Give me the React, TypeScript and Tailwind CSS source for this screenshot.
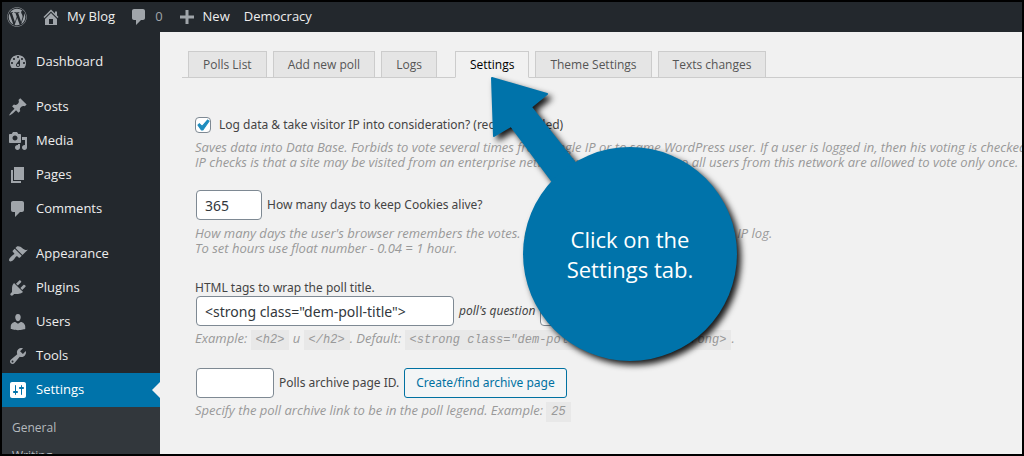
import React from 'react';
import { FaWordpress } from 'react-icons/fa';

const paths = {
  home: 'M16 8.5l1.53 1.53-1.06 1.06L10 4.6l-6.47 6.49-1.06-1.06L10 2.5l4 4v-2h2v4zm-6-2.46l6 5.99V18H4v-5.97zM12 17v-5H8v5h4z',
  comments: 'M5 2h9c1.1 0 2 .9 2 2v7c0 1.1-.9 2-2 2h-2l-5 5v-5H5c-1.1 0-2-.9-2-2V4c0-1.1.9-2 2-2z',
  plus: 'M17 8.5v3h-5.5V17h-3v-5.5H3v-3h5.5V3h3v5.5z',
  dashboard:
    'M3.76 16h12.48c1.1-1.37 1.76-3.11 1.76-5 0-4.42-3.58-8-8-8s-8 3.58-8 8c0 1.89.66 3.63 1.76 5zM10 4c.55 0 1 .45 1 1s-.45 1-1 1-1-.45-1-1 .45-1 1-1zM6 6c.55 0 1 .45 1 1s-.45 1-1 1-1-.45-1-1 .45-1 1-1zm8 0c.55 0 1 .45 1 1s-.45 1-1 1-1-.45-1-1 .45-1 1-1zm-5.37 5.55L12 7v6c0 1.1-.9 2-2 2s-2-.9-2-2c0-.57.24-1.08.63-1.45zM4 10c.55 0 1 .45 1 1s-.45 1-1 1-1-.45-1-1 .45-1 1-1zm12 0c.55 0 1 .45 1 1s-.45 1-1 1-1-.45-1-1 .45-1 1-1zm-5 3c0-.55-.45-1-1-1s-1 .45-1 1 .45 1 1 1 1-.45 1-1z',
  post: 'M10.44 3.02l1.82-1.82 6.36 6.35-1.83 1.82c-1.05-.68-2.48-.57-3.41.36l-.75.75c-.92.93-1.04 2.35-.35 3.41l-1.83 1.82-2.41-2.41-2.8 2.79c-.42.42-3.38 2.71-3.8 2.29s1.86-3.39 2.28-3.81l2.79-2.79L4.1 9.36l1.83-1.82c1.05.69 2.48.57 3.4-.36l.75-.75c.93-.92 1.05-2.35.36-3.41z',
  media:
    'M13 11V4c0-.55-.45-1-1-1h-1.67L9 1H5L3.67 3H2c-.55 0-1 .45-1 1v7c0 .55.45 1 1 1h10c.55 0 1-.45 1-1zM7 4.5c1.38 0 2.5 1.12 2.5 2.5S8.38 9.5 7 9.5 4.5 8.38 4.5 7 5.62 4.5 7 4.5zM14 6h5v10.5c0 1.38-1.12 2.5-2.5 2.5S14 17.88 14 16.5s1.12-2.5 2.5-2.5c.17 0 .34.02.5.05V9h-3V6zm-4 8.05V13h2v3.5c0 1.38-1.12 2.5-2.5 2.5S7 17.88 7 16.5 8.12 14 9.5 14c.17 0 .34.02.5.05z',
  page: 'M6 15V2h10v13H6zm-1 1h8v2H3V5h2v11z',
  appearance:
    'M14.48 11.06L7.41 3.99l1.5-1.5c.5-.56 2.3-.47 3.51.32 1.21.8 1.43 1.28 2.91 2.1 1.18.64 2.45 1.26 4.45.85zm-.71.71L6.7 4.7 4.93 6.47c-.39.39-.39 1.02 0 1.41l1.06 1.06c.39.39.39 1.03 0 1.42-.6.6-1.43 1.11-2.21 1.69-.35.26-.7.53-1.01.84C1.43 14.23.4 16.08 1.4 17.07c.99 1 2.84-.03 4.18-1.36.31-.31.58-.66.85-1.02.57-.78 1.08-1.61 1.69-2.21.39-.39 1.02-.39 1.41 0l1.06 1.06c.39.39 1.02.39 1.41 0z',
  plugins:
    'M13.11 4.36L9.87 7.6 8 5.73l3.24-3.24c.35-.34 1.05-.2 1.56.32.52.51.66 1.21.31 1.55zm-8 1.77l.91-1.12 9.01 9.01-1.19.84c-.71.71-2.63 1.16-3.82 1.16H6.14L4.9 17.26c-.59.59-1.54.59-2.12 0-.59-.58-.59-1.53 0-2.12l1.24-1.24v-3.88c0-1.13.4-3.19 1.09-3.89zm7.26 3.97l3.24-3.24c.34-.35 1.04-.21 1.55.31.52.51.66 1.21.31 1.55l-3.24 3.25z',
  users:
    'M10 9.25c-2.27 0-2.73-3.44-2.73-3.44C7 4.02 7.82 2 9.97 2c2.16 0 2.98 2.02 2.71 3.81 0 0-.41 3.44-2.68 3.44zm0 2.57L12.72 10c2.39 0 4.52 2.33 4.52 4.53v2.49s-3.65 1.13-7.24 1.13c-3.65 0-7.24-1.13-7.24-1.13v-2.49c0-2.25 1.94-4.48 4.47-4.48z',
  tools:
    'M16.68 9.77c-1.34 1.34-3.3 1.67-4.95.99l-5.41 6.52c-.99.99-2.59.99-3.58 0s-.99-2.59 0-3.57l6.52-5.42c-.68-1.65-.35-3.61.99-4.95 1.28-1.28 3.12-1.62 4.72-1.06l-2.89 2.89 2.82 2.82 2.86-2.87c.53 1.58.18 3.39-1.08 4.65zM3.81 16.21c.4.39 1.04.39 1.43 0 .4-.4.4-1.04 0-1.43-.39-.4-1.03-.4-1.43 0-.39.39-.39 1.03 0 1.43z',
  settings:
    'M18 16V4c0-1.1-.9-2-2-2H4c-1.1 0-2 .9-2 2v12c0 1.1.9 2 2 2h12c1.1 0 2-.9 2-2zM8 11h1c.55 0 1 .45 1 1s-.45 1-1 1H8v1.5c0 .28-.22.5-.5.5s-.5-.22-.5-.5V13H6c-.55 0-1-.45-1-1s.45-1 1-1h1V5.5c0-.28.22-.5.5-.5s.5.22.5.5V11zm5-2h-1c-.55 0-1-.45-1-1s.45-1 1-1h1V5.5c0-.28.22-.5.5-.5s.5.22.5.5V7h1c.55 0 1 .45 1 1s-.45 1-1 1h-1v5.5c0 .28-.22.5-.5.5s-.5-.22-.5-.5V9z',
};

type IconName = keyof typeof paths;

const Icon: React.FC<{ name: IconName; className?: string }> = ({ name, className = '' }) => (
  <svg viewBox="0 0 20 20" fill="currentColor" aria-hidden="true" className={`size-5 shrink-0 ${className}`}>
    <path fillRule="evenodd" d={paths[name]} />
  </svg>
);

const menuGroups: { label: string; icon: IconName }[][] = [
  [{ label: 'Dashboard', icon: 'dashboard' }],
  [
    { label: 'Posts', icon: 'post' },
    { label: 'Media', icon: 'media' },
    { label: 'Pages', icon: 'page' },
    { label: 'Comments', icon: 'comments' },
  ],
  [
    { label: 'Appearance', icon: 'appearance' },
    { label: 'Plugins', icon: 'plugins' },
    { label: 'Users', icon: 'users' },
    { label: 'Tools', icon: 'tools' },
    { label: 'Settings', icon: 'settings' },
  ],
];

const tabGroups = [
  ['Polls List', 'Add new poll', 'Logs'],
  ['Settings', 'Theme Settings', 'Texts changes'],
];

const inputClass = 'h-[30px] rounded border border-[#7e8993] bg-white px-2 text-sm text-[#32373c]';

const AdminBar = () => (
  <header className="flex h-[30px] shrink-0 items-center gap-[14px] bg-[#23282d] pl-[5px] text-[13px] text-[#eee]">
    <a href="#" aria-label="About WordPress" className="text-[#a0a5aa]">
      <FaWordpress className="size-5" />
    </a>
    <a href="#" className="flex items-center gap-[6px]">
      <Icon name="home" className="text-[#a0a5aa]" />
      My Blog
    </a>
    <a href="#" className="flex items-center gap-[6px] text-[#a0a5aa]">
      <Icon name="comments" />
      0
    </a>
    <a href="#" className="flex items-center gap-[6px]">
      <Icon name="plus" className="text-[#a0a5aa]" />
      New
    </a>
    <a href="#">Democracy</a>
  </header>
);

const Sidebar = () => (
  <nav className="w-[158px] shrink-0 bg-[#23282d] pt-[13px] text-[13px] text-[#eee]">
    <div className="flex flex-col gap-[11px]">
      {menuGroups.map((group, index) => (
        <ul key={index}>
          {group.map(({ label, icon }) => {
            const active = label === 'Settings';
            return (
              <li key={label} className={`relative ${active ? 'bg-[#0073aa] text-white' : ''}`}>
                <a href="#" className="flex h-[34px] items-center gap-2 pl-[6px]">
                  <Icon name={icon} className={active ? 'text-white' : 'text-[#a0a5aa]'} />
                  {label}
                </a>
                {active && (
                  <span className="absolute top-[9px] right-0 border-8 border-transparent border-r-[#f1f1f1]" />
                )}
              </li>
            );
          })}
        </ul>
      ))}
    </div>
    <ul className="bg-[#32373c] pt-[7px] pl-[10px] text-xs text-[#b4b9be]">
      <li className="h-7 leading-7">
        <a href="#">General</a>
      </li>
      <li className="h-7 leading-7">
        <a href="#">Writing</a>
      </li>
    </ul>
  </nav>
);

const Tabs = () => (
  <nav className="flex gap-[18px] border-b border-[#ccc] pl-[6px] text-xs font-medium text-[#555]">
    {tabGroups.map((group, index) => (
      <div key={index} className="-mb-px flex gap-[6px]">
        {group.map((tab) => (
          <a
            key={tab}
            href="#"
            className={`border px-[14px] leading-[25px] ${
              tab === 'Settings'
                ? 'border-[#ccc] border-b-[#f1f1f1] bg-[#f1f1f1] text-black'
                : 'border-[#ccc] bg-[#e5e5e5]'
            }`}
          >
            {tab}
          </a>
        ))}
      </div>
    ))}
  </nav>
);

const Hint: React.FC<{ children: React.ReactNode }> = ({ children }) => (
  <p className="font-['Open_Sans',sans-serif] text-[13px] leading-[15px] text-[#999] italic">{children}</p>
);

const Code: React.FC<{ children: React.ReactNode }> = ({ children }) => (
  <code className="inline-block bg-[#e8e8e8] px-[5px] font-['Liberation_Mono',monospace] text-xs leading-5">
    {children}
  </code>
);

const Callout = () => (
  <div className="pointer-events-none absolute top-[42px] left-[325px] h-[300px] w-[260px]">
    <svg viewBox="0 0 260 300" className="absolute inset-0 size-full drop-shadow-[4px_4px_3px_rgba(0,0,0,0.9)]">
      <path
        d="M7 4L62 20L46 33L91 90L67 107L26 52L9 62Z"
        fill="#0073aa"
        stroke="#0073aa"
        strokeWidth="2"
        strokeLinejoin="round"
      />
      <circle cx="145" cy="180" r="107" fill="#0073aa" />
    </svg>
    <p className="absolute top-[150px] left-[38px] w-[214px] text-center text-[22px] leading-[30px] text-white">
      Click on the
      <br />
      Settings tab.
    </p>
  </div>
);

const SettingsForm = () => (
  <form className="pl-[13px] font-['Noto_Sans',sans-serif] text-xs whitespace-nowrap text-[#444]">
    <div className="mt-[39px] flex items-center gap-2">
      <span className="relative flex size-4">
        <input
          id="log"
          type="checkbox"
          defaultChecked
          className="size-4 appearance-none rounded border border-[#7e8993] bg-white"
        />
        <svg viewBox="3 2 15 15" className="pointer-events-none absolute inset-0 size-4">
          <path d="M14.83 4.89l1.34.94-5.81 8.38H9.02L5.78 9.67l1.34-1.25 2.57 2.4z" fill="#1e8cbe" stroke="#1e8cbe" />
        </svg>
      </span>
      <label htmlFor="log" className="leading-4">
        Log data &amp; take visitor IP into consideration? (recommended)
      </label>
    </div>
    <div className="mt-[7px]">
      <Hint>
        Saves data into Data Base. Forbids to vote several times from single IP or to same WordPress user. If a user is
        logged in, then his voting is checked by WP account.
        <br />
        IP checks is that a site may be visited from an enterprise network (with common IP), so all users from this
        network are allowed to vote only once. If this option is disabled
      </Hint>
    </div>

    <div className="mt-5 flex items-center gap-[5px] pl-px">
      <input id="cookie-days" type="text" defaultValue="365" className={`w-[66px] ${inputClass}`} />
      <label htmlFor="cookie-days">How many days to keep Cookies alive?</label>
    </div>
    <div className="mt-[6px]">
      <Hint>
        How many days the user's browser remembers the votes. Default: 365. Note: works jointly with IP log.
        <br />
        To set hours use float number - 0.04 = 1 hour.
      </Hint>
    </div>

    <div className="mt-6">
      <label htmlFor="before-title" className="block leading-4">
        HTML tags to wrap the poll title.
      </label>
      <div className="flex items-center gap-[5px] pl-px">
        <input
          id="before-title"
          type="text"
          defaultValue={'<strong class="dem-poll-title">'}
          className={`w-[258px] ${inputClass}`}
        />
        <i>poll's question</i>
        <input type="text" aria-label="Closing tag" defaultValue="</strong>" className={`w-[120px] ${inputClass}`} />
      </div>
    </div>
    <div className="mt-1">
      <Hint>
        Example: <Code>&lt;h2&gt;</Code> и <Code>&lt;/h2&gt;</Code>. Default:{' '}
        <Code>&lt;strong class="dem-poll-title"&gt;....&lt;/strong&gt;</Code>.
      </Hint>
    </div>

    <div className="mt-[18px] flex items-center gap-[5px] pl-px">
      <input id="archive-id" type="text" className={`w-[78px] ${inputClass}`} />
      <label htmlFor="archive-id">Polls archive page ID.</label>
      <button
        type="button"
        className="h-[30px] rounded-[3px] border border-[#0071a1] bg-[#f3f5f6] px-[11px] text-[#0071a1]"
      >
        Create/find archive page
      </button>
    </div>
    <div className="mt-1">
      <Hint>
        Specify the poll archive link to be in the poll legend. Example: <Code>25</Code>
      </Hint>
    </div>
  </form>
);

const App = () => (
  <div className="flex h-screen flex-col overflow-hidden border-2 border-black bg-[#f1f1f1] font-['Open_Sans','Noto_Sans',sans-serif]">
    <AdminBar />
    <div className="flex grow">
      <Sidebar />
      <main className="relative min-w-0 grow overflow-hidden pt-[19px] pl-[22px]">
        <Tabs />
        <SettingsForm />
        <Callout />
      </main>
    </div>
  </div>
);

export default App;
